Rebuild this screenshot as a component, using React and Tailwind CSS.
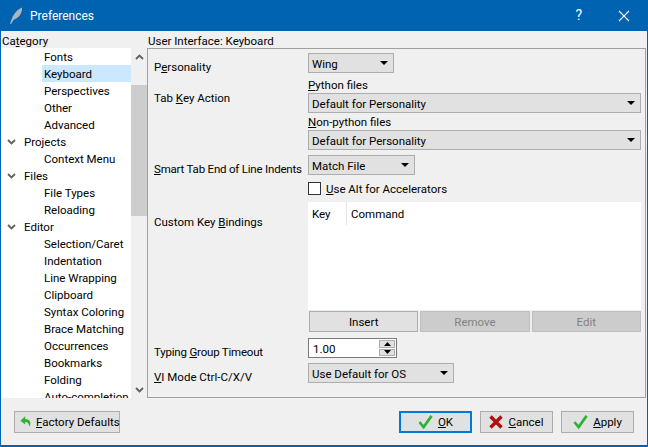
const font = { fontFamily: 'Roboto, "Noto Sans", sans-serif' }

const tree = [
  { label: 'Fonts', depth: 1 },
  { label: 'Keyboard', depth: 1, selected: true },
  { label: 'Perspectives', depth: 1 },
  { label: 'Other', depth: 1 },
  { label: 'Advanced', depth: 1 },
  { label: 'Projects', depth: 0 },
  { label: 'Context Menu', depth: 1 },
  { label: 'Files', depth: 0 },
  { label: 'File Types', depth: 1 },
  { label: 'Reloading', depth: 1 },
  { label: 'Editor', depth: 0 },
  { label: 'Selection/Caret', depth: 1 },
  { label: 'Indentation', depth: 1 },
  { label: 'Line Wrapping', depth: 1 },
  { label: 'Clipboard', depth: 1 },
  { label: 'Syntax Coloring', depth: 1 },
  { label: 'Brace Matching', depth: 1 },
  { label: 'Occurrences', depth: 1 },
  { label: 'Bookmarks', depth: 1 },
  { label: 'Folding', depth: 1 },
  { label: 'Auto-completion', depth: 1 },
]

function Chevron({ up = false, className = '' }) {
  return (
    <svg width="9" height="6" viewBox="0 0 9 6" className={className}>
      <path d={up ? 'M1 5 L4.5 1.5 L8 5' : 'M1 1 L4.5 4.5 L8 1'} fill="none" stroke="#606060" strokeWidth="1.8" />
    </svg>
  )
}

function TreeRow({ item }) {
  if (item.depth === 0) {
    return (
      <div className="flex h-[17px] items-center whitespace-nowrap">
        <span className="flex w-[23px] justify-center pr-[3px]"><Chevron /></span>
        <span className="pt-[2px]">{item.label}</span>
      </div>
    )
  }
  return (
    <div className="flex h-[17px] items-center pl-[41px] whitespace-nowrap">
      <div className={`flex h-[17px] items-center pl-[2px] ${item.selected ? 'w-[89px] bg-[#cce8ff]' : ''}`}>
        <span className="pt-[2px]">{item.label}</span>
      </div>
    </div>
  )
}

function Select({ children, className = '' }) {
  return (
    <div className={`flex h-[20px] items-center justify-between border border-[#adadad] bg-[#e1e1e1] pr-[5px] pl-[3px] whitespace-nowrap ${className}`}>
      <span className="pt-[2px]">{children}</span>
      <svg width="8" height="4" viewBox="0 0 8 4"><path d="M0 0 H8 L4 4 Z" fill="#000" /></svg>
    </div>
  )
}

function PushButton({ children, disabled = false, className = '' }) {
  return (
    <div className={`flex h-[21px] flex-1 items-center justify-center border ${disabled ? 'border-[#bfbfbf] bg-[#cccccc] text-[#838383]' : 'border-[#adadad] bg-[#e1e1e1]'} ${className}`}>
      <span className="pt-[2px]">{children}</span>
    </div>
  )
}

function Check() {
  return (
    <svg width="15" height="15" viewBox="0 0 16 16">
      <path d="M1.5 8.5 L6 14 L14.5 2" fill="none" stroke="#2eb135" strokeWidth="2.8" />
    </svg>
  )
}

function DialogButton({ icon, children, isDefault = false }) {
  return (
    <div className={`flex h-[22px] w-[73px] items-center justify-center gap-[5px] bg-[#e1e1e1] ${isDefault ? 'border-2 border-[#0078d7]' : 'border border-[#adadad]'}`}>
      {icon}
      <span className="pt-[2px]">{children}</span>
    </div>
  )
}

export default function App() {
  return (
    <div style={font} className="flex h-[447px] w-[648px] flex-col overflow-hidden border-x border-b-2 border-[#0063b1] bg-[#f0f0f0] text-[11.5px] leading-[17px] text-black">
      <header className="-mx-px flex h-[31px] shrink-0 items-center bg-[#0063b1] text-white">
        <svg width="14" height="18" viewBox="0 0 14 18" className="ml-[9px]">
          <path d="M1 17 C3 11 5 4 13 0.5 C13.5 6 10 11 5 12.5 L2 17 Z" fill="#a9b4c0" />
        </svg>
        <span className="ml-[7px] pt-[2px] text-[12px]">Preferences</span>
        <span className="ml-auto text-[14px]">?</span>
        <svg width="12" height="12" viewBox="0 0 12 12" className="mr-[18px] ml-[36px]">
          <path d="M1 1 L11 11 M11 1 L1 11" stroke="#fff" strokeWidth="1.1" />
        </svg>
      </header>

      <main className="flex h-[367px] shrink-0">
        <section className="flex w-[146px] shrink-0 flex-col">
          <div className="h-[17px] pt-[2px] pl-px"><span>Ca<u>t</u>egory</span></div>
          <div className="flex h-[350px]">
            <div className="w-[130px] overflow-hidden bg-white">
              {tree.map((item) => <TreeRow key={item.label} item={item} />)}
            </div>
            <div className="flex w-[16px] flex-col items-center bg-[#f0f0f0]">
              <div className="flex h-[17px] shrink-0 items-center justify-center"><Chevron up /></div>
              <div className="mt-[20px] h-[131px] w-full bg-[#cdcdcd]" />
              <div className="mt-auto mb-[5px]"><Chevron /></div>
            </div>
          </div>
        </section>

        <section className="flex min-w-0 flex-1 flex-col">
          <div className="h-[17px] pt-[2px] pl-px">User Interface: Keyboard</div>
          <div className="mr-[1px] flex h-[350px] flex-col border border-[#a0a0a0] pt-[4px] pr-[4px] pl-[6px]">
            <div className="flex h-[20px]">
              <div className="w-[154px] pt-[6px]">P<u>e</u>rsonality</div>
              <Select className="w-[86px]">Wing</Select>
            </div>

            <div className="mt-[2px] flex">
              <div className="w-[154px] pt-[15px]">Tab <u>K</u>ey Action</div>
              <div className="flex-1">
                <div className="h-[18px] pt-[2px]"><u>P</u>ython files</div>
                <Select>Default for Personality</Select>
                <div className="h-[17px] pt-px"><u>N</u>on-python files</div>
                <Select>Default for Personality</Select>
              </div>
            </div>

            <div className="mt-[5px] flex h-[20px]">
              <div className="w-[154px] pt-[6px] tracking-[-0.2px] whitespace-nowrap"><u>S</u>mart Tab End of Line Indents</div>
              <Select className="w-[107px]">Match File</Select>
            </div>

            <div className="mt-[5px] ml-[154px] flex h-[17px] items-center gap-[5px]">
              <div className="h-[13px] w-[13px] border border-[#333] bg-white" />
              <span className="pt-[2px]"><u>U</u>se Alt for Accelerators</span>
            </div>

            <div className="mt-[5px] flex">
              <div className="w-[154px] pt-[12px]">Custom Key <u>B</u>indings</div>
              <div className="flex-1">
                <div className="h-[108px] bg-white">
                  <div className="flex h-[23px] items-center">
                    <div className="flex h-full w-[39px] items-center border-r border-[#e5e5e5] pl-[4px]"><span className="pt-[2px]">Key</span></div>
                    <div className="pt-[2px] pl-[4px]">Command</div>
                  </div>
                </div>
                <div className="mt-px flex gap-[2px] pl-px">
                  <PushButton>Insert</PushButton>
                  <PushButton disabled>Remove</PushButton>
                  <PushButton disabled>Edit</PushButton>
                </div>
              </div>
            </div>

            <div className="mt-[6px] flex h-[20px]">
              <div className="w-[154px] pt-[6px] tracking-[-0.2px]">Typing <u>G</u>roup Timeout</div>
              <div className="flex w-[89px] items-stretch border border-[#7a7a7a] bg-white">
                <div className="flex-1 pt-[2px] pl-[4px]">1.00</div>
                <div className="my-px mr-px flex w-[16px] flex-col gap-px">
                  <div className="flex flex-1 items-center justify-center border border-[#adadad] bg-[#e1e1e1]">
                    <svg width="7" height="4" viewBox="0 0 7 4"><path d="M0 4 L3.5 0 L7 4 Z" fill="#000" /></svg>
                  </div>
                  <div className="flex flex-1 items-center justify-center border border-[#adadad] bg-[#e1e1e1]">
                    <svg width="7" height="4" viewBox="0 0 7 4"><path d="M0 0 H7 L3.5 4 Z" fill="#000" /></svg>
                  </div>
                </div>
              </div>
            </div>

            <div className="mt-[5px] flex h-[20px]">
              <div className="w-[154px] pt-[6px]"><u>V</u>I Mode Ctrl-C/X/V</div>
              <Select className="w-[146px]">Use Default for OS</Select>
            </div>
          </div>
        </section>
      </main>

      <footer className="flex flex-1 items-center pr-[13px] pl-[13px]">
        <div className="flex h-[22px] w-[106px] items-center gap-[4px] border border-[#adadad] bg-[#e1e1e1] pl-[5px]">
          <svg width="12" height="13" viewBox="0 0 14 13" className="shrink-0">
            <path d="M6 0.5 L0.5 5.5 L6 10 V7 C9 7 10.5 9 11 12.5 C13.5 8 12 3.5 6 3.5 Z" fill="#2eb135" />
          </svg>
          <span className="pt-[2px] whitespace-nowrap"><u>F</u>actory Defaults</span>
        </div>
        <div className="ml-auto flex gap-[8px]">
          <DialogButton isDefault icon={<Check />}><u>O</u>K</DialogButton>
          <DialogButton icon={
            <svg width="14" height="14" viewBox="0 0 14 14">
              <path d="M1.5 1.5 L12.5 12.5 M12.5 1.5 L1.5 12.5" stroke="#b20f0f" strokeWidth="3.4" />
            </svg>
          }><u>C</u>ancel</DialogButton>
          <DialogButton icon={<Check />}><u>A</u>pply</DialogButton>
        </div>
      </footer>
    </div>
  )
}
